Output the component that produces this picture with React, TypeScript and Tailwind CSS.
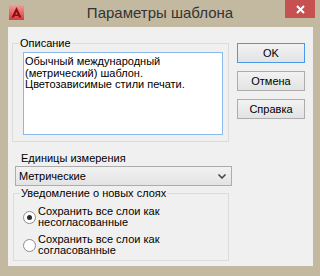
import React from "react";

/**
 * Template options dialog (Windows 8 style)
 */

function AppIcon() {
  return (
    <svg width="15" height="15" viewBox="0 0 15 15">
      <defs>
        <linearGradient id="ic" x1="0" y1="0" x2="0" y2="1">
          <stop offset="0" stopColor="#f49a9a" />
          <stop offset="1" stopColor="#d83a3a" />
        </linearGradient>
      </defs>
      <rect x="0" y="0" width="15" height="15" fill="url(#ic)" />
      <polygon points="7.5,2 12.5,12.5 10,12.5 7.5,7 5,12.5 2.5,12.5" fill="#8a0f0f" />
      <rect x="4.5" y="9.5" width="6" height="1.5" fill="#8a0f0f" />
    </svg>
  );
}

function DialogButton({ label, primary = false }: { label: string; primary?: boolean }) {
  return (
    <button
      type="button"
      className={`w-[68px] h-[20px] border text-[11px] leading-none text-black bg-linear-to-b from-[#f2f2f2] to-[#e3e3e3] ${
        primary ? "border-[#4a98e8]" : "border-[#adadad]"
      }`}
    >
      {label}
    </button>
  );
}

function Radio({ checked, lines }: { checked: boolean; lines: string[] }) {
  return (
    <div className="flex items-center">
      <div className="ml-[9px] w-[13px] h-[13px] rounded-full border border-[#8c8c8c] bg-white flex items-center justify-center">
        {checked && <div className="w-[5px] h-[5px] rounded-full bg-[#2a2a2a]" />}
      </div>
      <div className="ml-[2px] leading-[11px]">
        {lines.map((l) => (
          <div key={l}>{l}</div>
        ))}
      </div>
    </div>
  );
}

export default function App() {
  return (
    <div className="w-[320px] h-[276px] bg-[#c2b9a0] font-['Liberation_Sans',Arial,sans-serif] text-[11px] text-black">
      {/* Title bar */}
      <div className="h-[27px] grid grid-cols-[35px_1fr_35px]">
        <div className="ml-[9px] mt-[5px]">
          <AppIcon />
        </div>
        <div className="mt-[4px] text-center text-[15px] leading-[18px] text-[#333333]">
          Параметры шаблона
        </div>
        <div className="w-[30px] h-[18px] bg-[#c75050] flex items-center justify-center">
          <svg width="9" height="9" viewBox="0 0 9 9">
            <path d="M1 1L8 8M8 1L1 8" stroke="#ffffff" strokeWidth="2" />
          </svg>
        </div>
      </div>

      {/* Client area */}
      <div className="ml-[8px] w-[305px] h-[239px] bg-[#f0f0f0] flex">
        <div className="ml-[4px] w-[221px] pt-[10px] flex flex-col">
          <fieldset className="w-[217px] border border-[#dcdcdc] pb-[6px]">
            <legend className="ml-[6px] px-[1px] leading-[13px]">Описание</legend>
            <div className="ml-[10px] mt-[2px] w-[200px] h-[83px] border border-[#8ab8e8] bg-white pl-[1px] pt-[3px] leading-[11.5px]">
              Обычный международный
              <br />
              (метрический) шаблон.
              <br />
              Цветозависимые стили печати.
            </div>
          </fieldset>

          <div className="ml-[9px] mt-[10px] leading-[13px]">Единицы измерения</div>
          <div className="ml-[3px] mt-[1px] w-[217px] h-[20px] border border-[#acacac] bg-linear-to-b from-[#f2f2f2] to-[#e3e3e3] flex items-center justify-between pl-[3px] pr-[5px]">
            <span>Метрические</span>
            <svg width="8" height="5" viewBox="0 0 8 5">
              <path d="M0.5 0.5L4 4L7.5 0.5" stroke="#404040" strokeWidth="1.5" fill="none" />
            </svg>
          </div>

          <fieldset className="ml-[1px] mt-[1px] w-[216px] border border-[#dcdcdc] pb-[4px]">
            <legend className="ml-[6px] px-[1px] leading-[13px]">Уведомление о новых слоях</legend>
            <div className="pt-[6px] flex flex-col gap-[6px]">
              <Radio checked lines={["Сохранить все слои как", "несогласованные"]} />
              <Radio checked={false} lines={["Сохранить все слои как", "согласованные"]} />
            </div>
          </fieldset>
        </div>

        {/* Buttons */}
        <div className="ml-[4px] pt-[16px] flex flex-col gap-[8px]">
          <DialogButton label="OK" primary />
          <DialogButton label="Отмена" />
          <DialogButton label="Справка" />
        </div>
      </div>
    </div>
  );
}
